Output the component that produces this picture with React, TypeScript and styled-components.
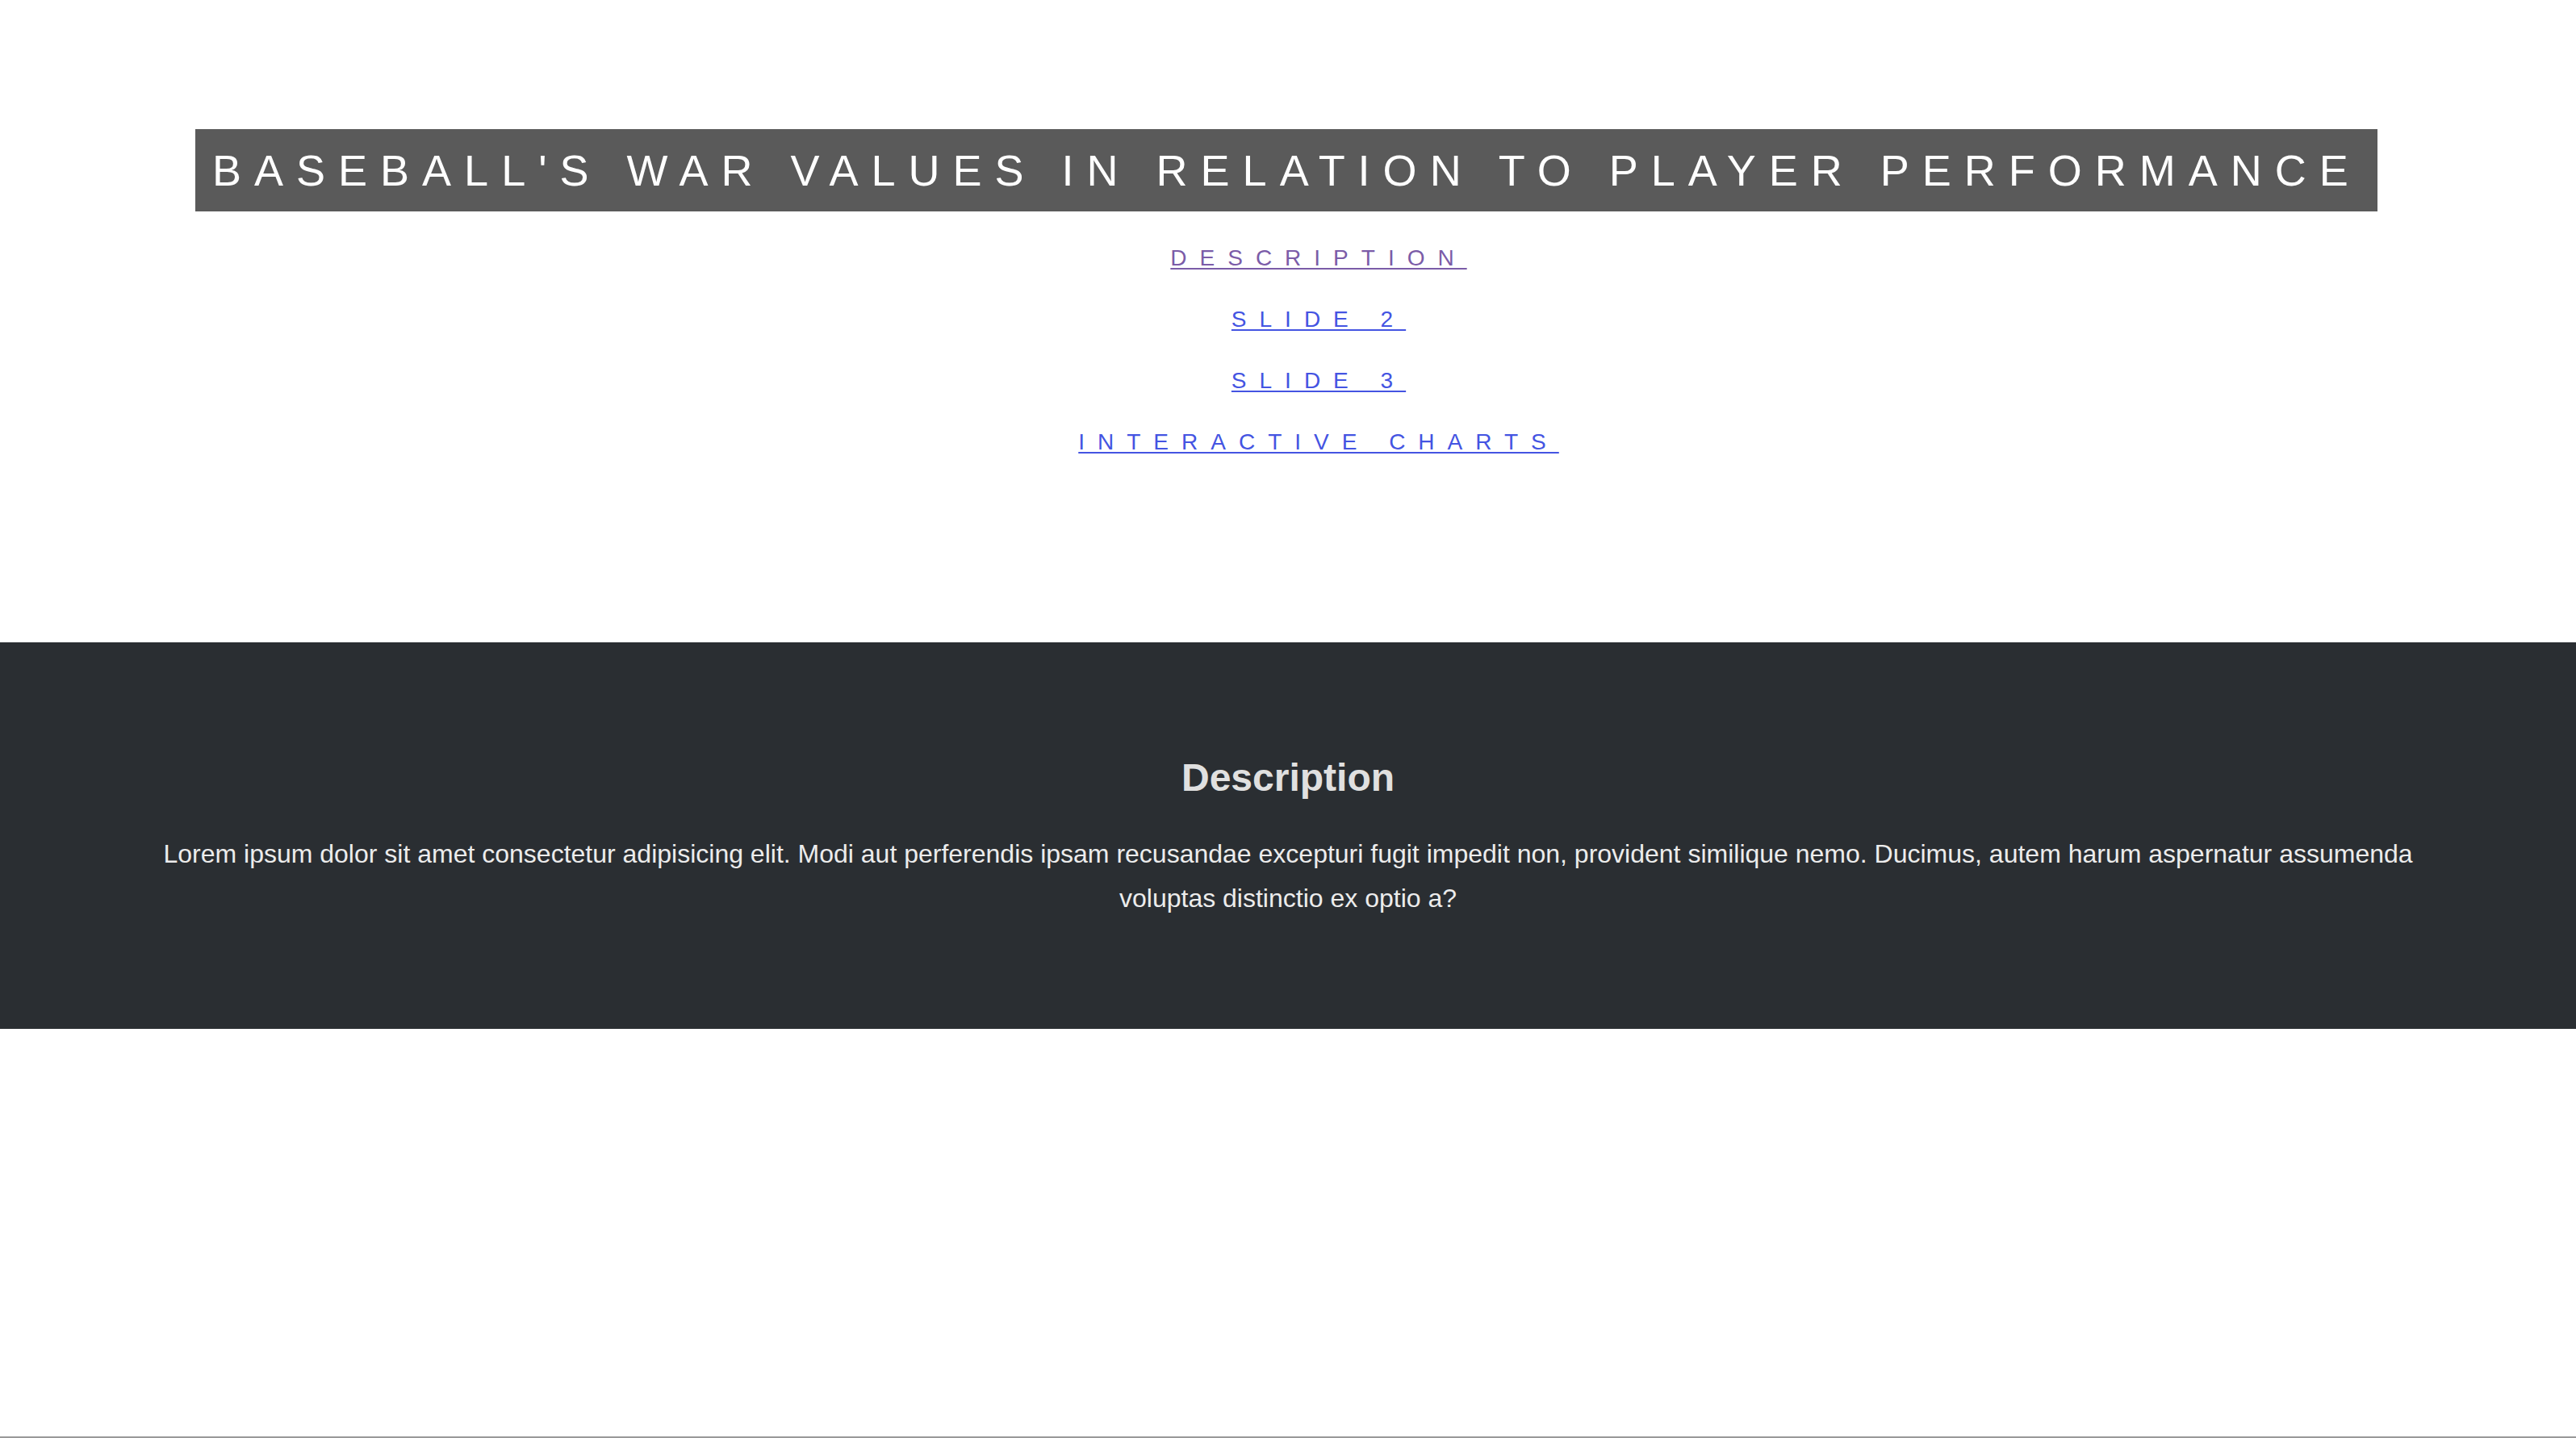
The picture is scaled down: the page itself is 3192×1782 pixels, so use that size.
import React from "react";
import styled, { createGlobalStyle } from "styled-components";

const GlobalStyle = createGlobalStyle`
  html, body {
    margin: 0;
    padding: 0;
    background: #ffffff;
    font-family: "Liberation Sans", Arial, Helvetica, sans-serif;
  }
  * { box-sizing: border-box; }
`;

const Page = styled.div`
  min-height: 100vh;
  display: flex;
  flex-direction: column;
  border-bottom: 2px solid #999999;
`;

const Header = styled.header`
  display: flex;
  flex-direction: column;
  padding-top: 160px;
  padding-bottom: 210px;
`;

const TitleBar = styled.h1`
  margin: 0 0 0 242px;
  width: 2704px;
  height: 102px;
  line-height: 102px;
  padding-left: 21px;
  background: #5a5a5a;
  color: #ffffff;
  font-size: 54px;
  font-weight: 400;
  letter-spacing: 16px;
  white-space: nowrap;
  text-transform: uppercase;
`;

const Nav = styled.nav`
  display: flex;
  flex-direction: column;
  align-items: center;
  padding-top: 20px;
  padding-left: 76px;
`;

const NavLink = styled.a<{ $visited?: boolean }>`
  display: block;
  font-size: 28px;
  line-height: 76px;
  letter-spacing: 16px;
  text-transform: uppercase;
  color: ${(p) => (p.$visited ? "#7b5ca8" : "#4454e2")};
  text-decoration: underline;
  text-decoration-thickness: 2px;
  text-underline-offset: 3px;
`;

const DescriptionSection = styled.section`
  background: #2a2e32;
  color: #e2e2e2;
  padding: 140px 150px 134px;
  display: flex;
  flex-direction: column;
  align-items: center;
  text-align: center;
`;

const SectionTitle = styled.h2`
  margin: 0 0 40px;
  font-size: 48px;
  line-height: 55px;
  font-weight: 700;
  color: #e0e0e0;
`;

const SectionText = styled.p`
  margin: 0;
  font-size: 32px;
  line-height: 55px;
  color: #ececec;
`;

const Spacer = styled.div`
  flex: 1;
`;

export default function App() {
  return (
    <>
      <GlobalStyle />
      <Page>
        <Header>
          <TitleBar>Baseball's WAR values in relation to player performance</TitleBar>
          <Nav>
            <NavLink href="#description" $visited>Description</NavLink>
            <NavLink href="#slide2">Slide 2</NavLink>
            <NavLink href="#slide3">Slide 3</NavLink>
            <NavLink href="#charts">Interactive Charts</NavLink>
          </Nav>
        </Header>
        <DescriptionSection id="description">
          <SectionTitle>Description</SectionTitle>
          <SectionText>
            Lorem ipsum dolor sit amet consectetur adipisicing elit. Modi aut perferendis ipsam recusandae excepturi fugit impedit non, provident similique nemo. Ducimus, autem harum aspernatur assumenda voluptas distinctio ex optio a?
          </SectionText>
        </DescriptionSection>
        <Spacer />
      </Page>
    </>
  );
}
